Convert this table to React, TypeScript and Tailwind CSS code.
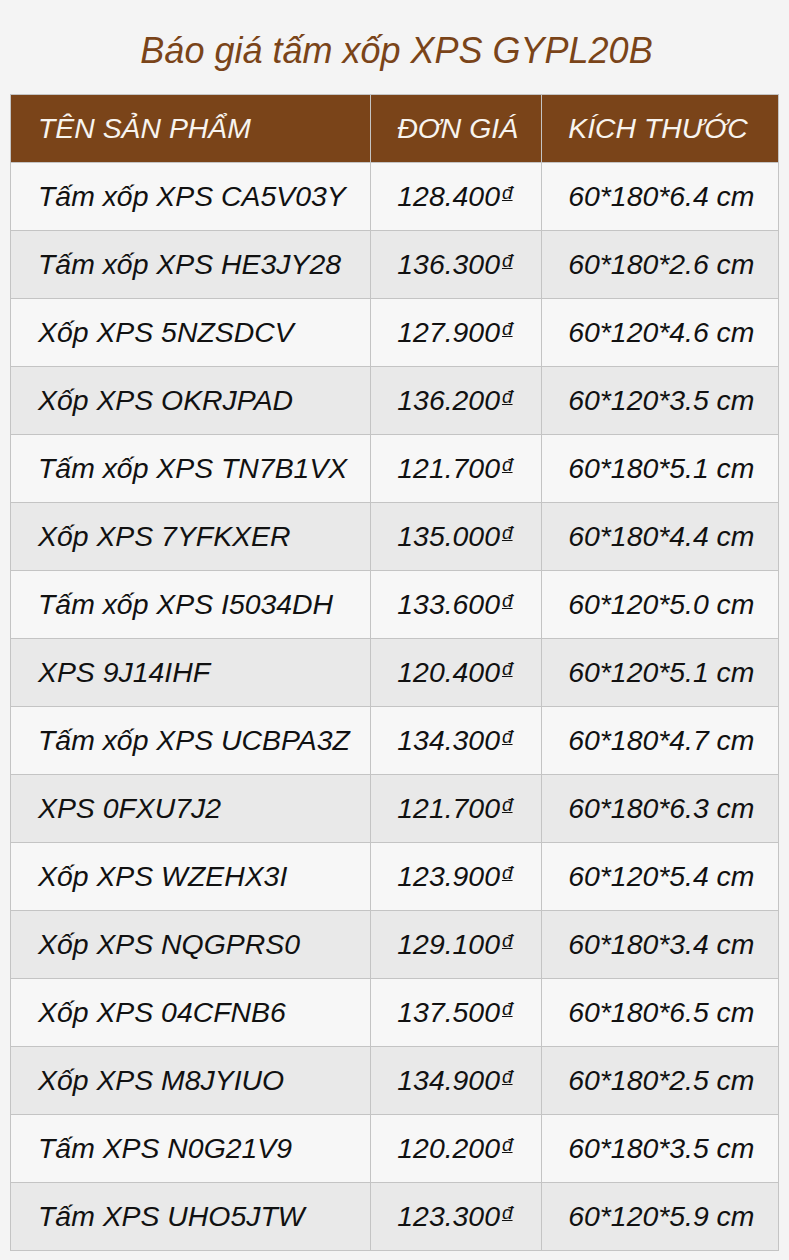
// Bảng báo giá tấm xốp XPS

const rows: [string, string, string][] = [
  ["Tấm xốp XPS CA5V03Y", "128.400", "60*180*6.4 cm"],
  ["Tấm xốp XPS HE3JY28", "136.300", "60*180*2.6 cm"],
  ["Xốp XPS 5NZSDCV", "127.900", "60*120*4.6 cm"],
  ["Xốp XPS OKRJPAD", "136.200", "60*120*3.5 cm"],
  ["Tấm xốp XPS TN7B1VX", "121.700", "60*180*5.1 cm"],
  ["Xốp XPS 7YFKXER", "135.000", "60*180*4.4 cm"],
  ["Tấm xốp XPS I5034DH", "133.600", "60*120*5.0 cm"],
  ["XPS 9J14IHF", "120.400", "60*120*5.1 cm"],
  ["Tấm xốp XPS UCBPA3Z", "134.300", "60*180*4.7 cm"],
  ["XPS 0FXU7J2", "121.700", "60*180*6.3 cm"],
  ["Xốp XPS WZEHX3I", "123.900", "60*120*5.4 cm"],
  ["Xốp XPS NQGPRS0", "129.100", "60*180*3.4 cm"],
  ["Xốp XPS 04CFNB6", "137.500", "60*180*6.5 cm"],
  ["Xốp XPS M8JYIUO", "134.900", "60*180*2.5 cm"],
  ["Tấm XPS N0G21V9", "120.200", "60*180*3.5 cm"],
  ["Tấm XPS UHO5JTW", "123.300", "60*120*5.9 cm"],
];

export default function App() {
  return (
    <div
      className="min-h-[1260px] bg-[#f4f4f4] pt-[31px]"
      style={{ fontFamily: "'Liberation Sans', Arial, sans-serif" }}
    >
      <h1 className="text-center text-[36px] leading-[40px] italic text-[#7a4419] mb-[23px] pl-[4px]">
        Báo giá tấm xốp XPS GYPL20B
      </h1>

      <div className="px-[10px]">
        <table className="w-[769px] border-collapse border border-[#c4c4c4] italic text-[28.4px]">
          <colgroup>
            <col className="w-[361px]" />
            <col className="w-[171px]" />
            <col className="w-[237px]" />
          </colgroup>
          <thead>
            <tr className="h-[68px] bg-[#7a4419] text-[#f8f4ef]">
              <th className="border border-[#c4c4c4] pl-[27px] text-left font-normal">TÊN SẢN PHẨM</th>
              <th className="border border-[#c4c4c4] pl-[26px] text-left font-normal">ĐƠN GIÁ</th>
              <th className="border border-[#c4c4c4] pl-[26px] text-left font-normal">KÍCH THƯỚC</th>
            </tr>
          </thead>
          <tbody>
            {rows.map((row, i) => (
              <tr
                key={i}
                className={`h-[68px] text-[#111] ${i % 2 === 0 ? "bg-[#f7f7f7]" : "bg-[#e9e9e9]"}`}
              >
                <td className="border border-[#c4c4c4] pl-[27px]">{row[0]}</td>
                <td className="border border-[#c4c4c4] pl-[26px]">
                  {row[1]}
                  <sup className="underline text-[19px] top-[-7px] pl-[2px]">đ</sup>
                </td>
                <td className="border border-[#c4c4c4] pl-[26px]">{row[2]}</td>
              </tr>
            ))}
          </tbody>
        </table>
      </div>
    </div>
  );
}
